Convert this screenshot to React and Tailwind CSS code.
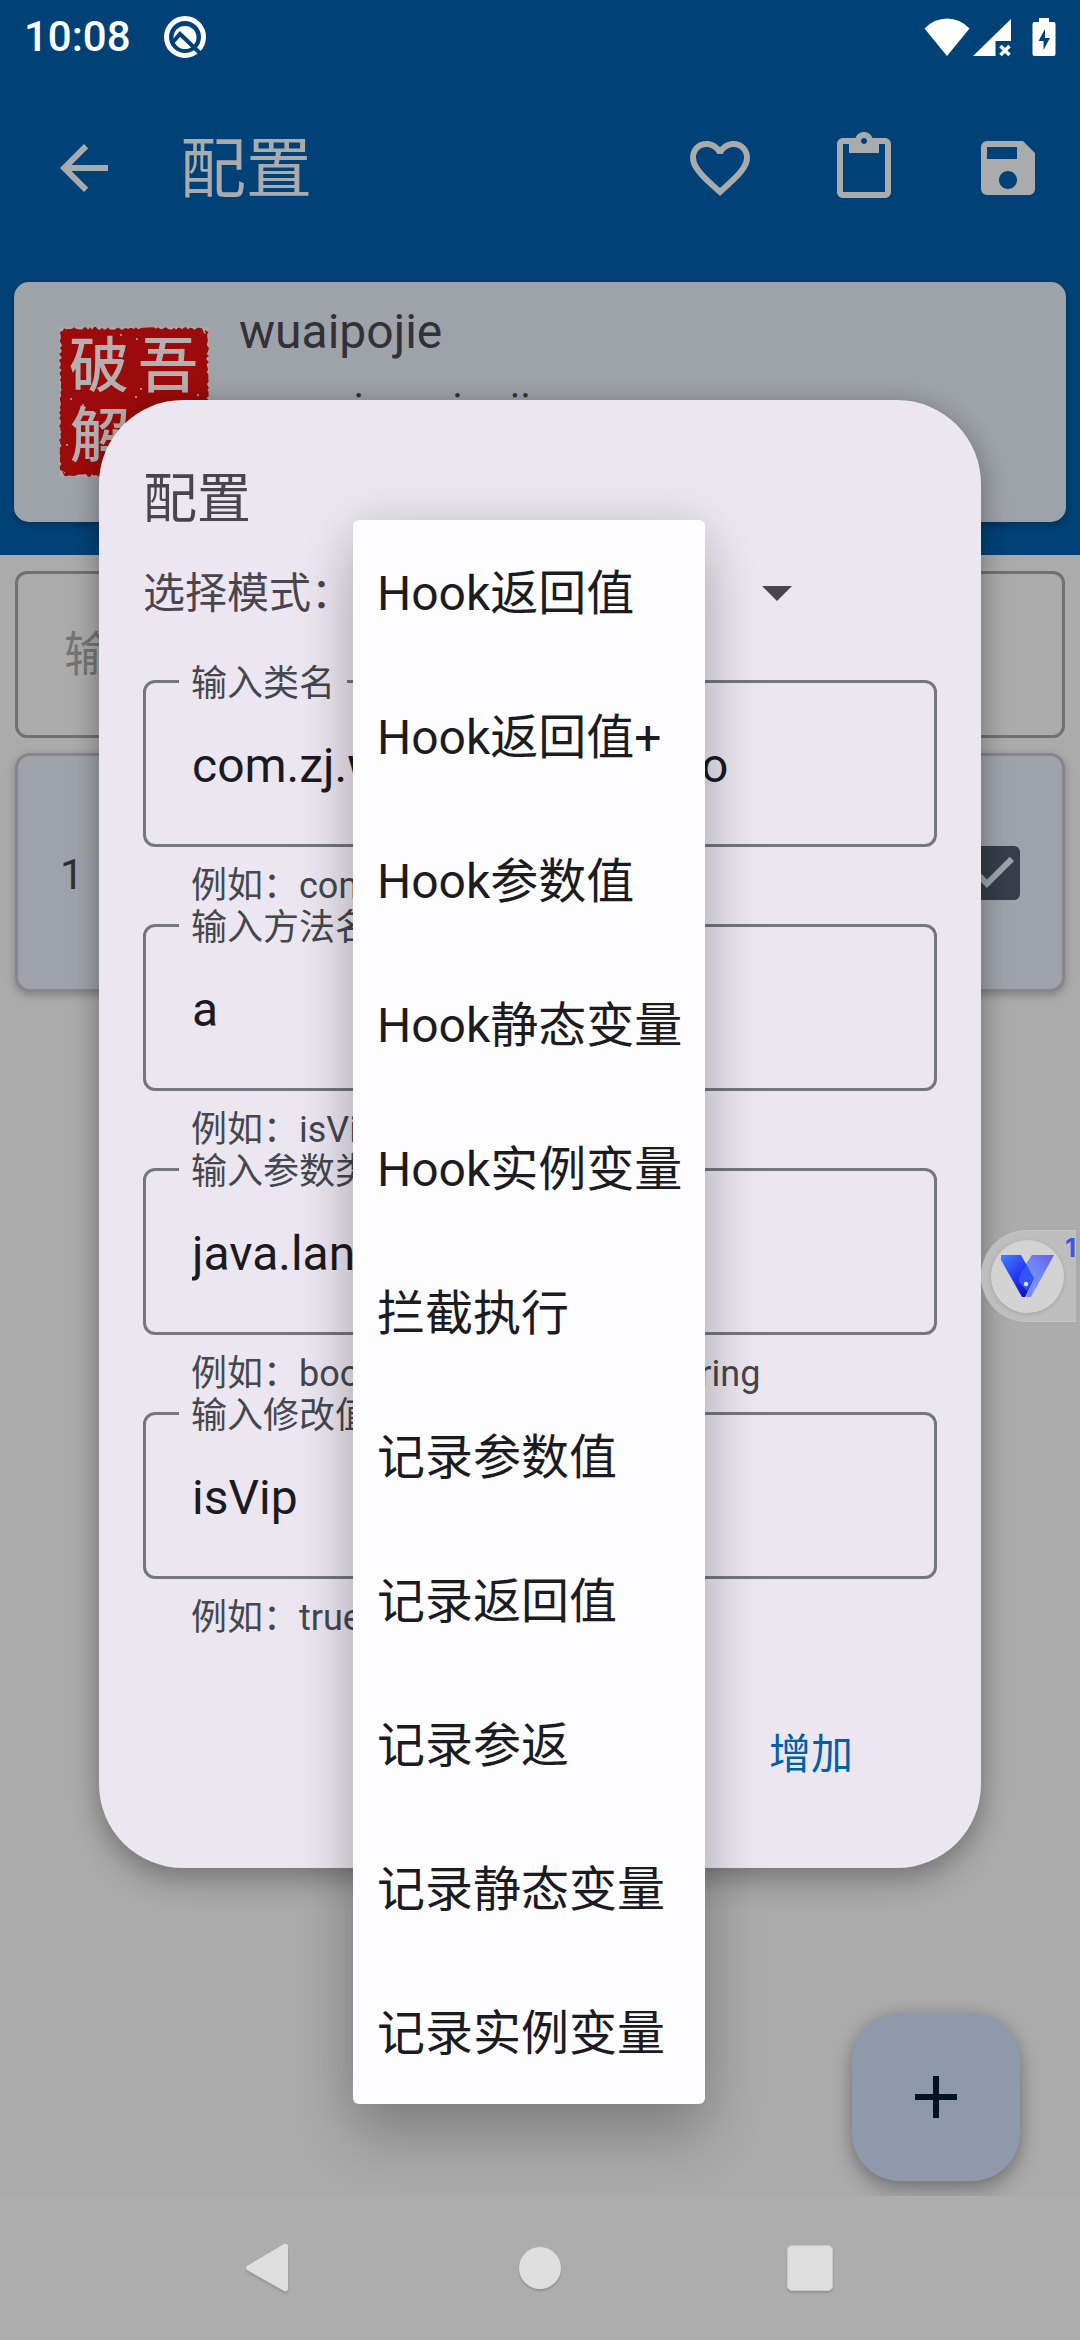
import React from "react";
import { MdArrowBack, MdFavoriteBorder, MdContentPaste, MdSave } from "react-icons/md";

const FIELDS = [
  { id: "class", label: "输入类名", value: "com.zj.wuaipojie.a.Demo", help: "例如：com.zj.Demo" },
  { id: "method", label: "输入方法名", value: "a", help: "例如：isVip" },
  { id: "params", label: "输入参数类型", value: "java.lang.String", help: "例如：boolean,float,java.lang.String" },
  { id: "result", label: "输入修改值", value: "isVip", help: "例如：true" },
];

const MODES = [
  "Hook返回值",
  "Hook返回值+",
  "Hook参数值",
  "Hook静态变量",
  "Hook实例变量",
  "拦截执行",
  "记录参数值",
  "记录返回值",
  "记录参返",
  "记录静态变量",
  "记录实例变量",
];

function StatusBar() {
  return (
    <div className="flex h-[72px] items-center pl-6 pr-6 pt-[2px] text-white">
      <span className="text-[42px] font-medium leading-[60px]">10:08</span>
      <svg className="ml-[33px]" width="42" height="42" viewBox="0 0 42 42" aria-hidden="true">
        <circle cx="21" cy="21" r="18.5" fill="none" stroke="#fff" strokeWidth="5" />
        <circle cx="21" cy="21.5" r="11.5" fill="#fff" />
        <path d="M9 26l7-8 22 21" fill="none" stroke="#004277" strokeWidth="4" />
      </svg>
      <div className="ml-auto flex items-center">
        <svg width="46" height="40" viewBox="0 0 46 40" aria-hidden="true">
          <path d="M0.5 11.5Q10 1.5 23 1.5T45.5 11.5L23 39z" fill="#fff" />
        </svg>
        <svg className="ml-[3px]" width="39" height="40" viewBox="0 0 39 40" aria-hidden="true">
          <path d="M38 2v22H22.500v15H0z" fill="#fff" />
          <path d="M27.500 29l9 9m0-9l-9 9" stroke="#fff" strokeWidth="3.500" />
        </svg>
        <svg className="ml-5" width="24" height="40" viewBox="0 0 24 40" aria-hidden="true">
          <path d="M7 1h10v4h4.500q2 0 2 2v30q0 2-2 2h-19q-2 0-2-2V7q0-2 2-2H7z" fill="#fff" />
          <path d="M13 12v9h5l-6.500 12v-9H6.500z" fill="#004277" />
        </svg>
      </div>
    </div>
  );
}

function AppBar() {
  const action = "flex size-36 items-center justify-center";
  return (
    <div className="flex h-48 items-center text-[#a9abad]">
      <button aria-label="返回" className="flex h-36 w-[168px] items-center justify-center">
        <MdArrowBack size={72} />
      </button>
      <h1 className="ml-3 flex-1 pt-1 text-[66px] leading-[84px]">配置</h1>
      <button aria-label="收藏" className={action}><MdFavoriteBorder size={72} /></button>
      <button aria-label="粘贴" className={action}><MdContentPaste size={72} /></button>
      <button aria-label="保存" className={action}><MdSave size={72} /></button>
    </div>
  );
}

// Deterministic ragged outline for the seal stamp.
function sealOutline() {
  const pts = [];
  let seed = 7;
  const rnd = () => {
    seed = (seed * 16807) % 2147483647;
    return (seed % 100) / 100;
  };
  const inset = (t) => (t < 5 || t > 143 ? 4 : 0) + rnd() * 3;
  for (let t = 3; t <= 147; t += 2) pts.push([t, inset(t)]);
  for (let t = 3; t <= 147; t += 2) pts.push([150 - inset(t), t]);
  for (let t = 147; t >= 3; t -= 2) pts.push([t, 150 - inset(t)]);
  for (let t = 147; t >= 3; t -= 2) pts.push([inset(t), t]);
  return pts.map((p) => p.join(",")).join(" ");
}

function Seal() {
  return (
    <svg width="150" height="150" viewBox="0 0 150 150" role="img" aria-label="吾爱破解">
      <rect width="150" height="150" fill="#aba8ab" />
      <polygon points={sealOutline()} fill="#9c0b0b" />
      <g fill="#b5afaf" fontSize="60" fontWeight="500" textAnchor="middle" fontFamily='"Noto Sans CJK SC", sans-serif'>
        <text x="40" y="60">破</text>
        <text x="109" y="60">吾</text>
        <text x="41" y="130">解</text>
        <text x="109" y="130">爱</text>
      </g>
      <g fill="#b5afaf">
        <circle cx="78" cy="12" r="1" /><circle cx="62" cy="8" r="1" /><circle cx="82" cy="62" r="1" />
        <circle cx="77" cy="70" r="1" /><circle cx="12" cy="72" r="1" /><circle cx="139" cy="68" r="1" />
        <circle cx="24" cy="78" r="1" /><circle cx="8" cy="118" r="1" />
      </g>
    </svg>
  );
}

function Field({ id, label, value, help }) {
  return (
    <div>
      <div className="relative">
        <input
          id={id}
          defaultValue={value}
          className="h-[167px] w-full rounded-xl border-3 border-[#74777f] bg-transparent px-[46px] pt-1 text-[48px] text-[#1b1b1f] outline-none"
        />
        <label htmlFor={id} className="absolute -top-4 left-9 bg-[#ece6f0] px-3 text-[36px] leading-[40px] text-[#44474e]">
          {label}
        </label>
      </div>
      <p className="mt-[19px] h-[38px] pl-12 text-[36px] leading-[40px] text-[#44474e]">{help}</p>
    </div>
  );
}

function ModeSelect() {
  return (
    <div className="relative w-[460px]">
      <button
        id="mode"
        aria-haspopup="listbox"
        aria-expanded="true"
        className="flex h-21 w-full items-center justify-between pl-6 text-[48px] text-[#1b1b1f]"
      >
        Hook返回值
        <svg width="72" height="72" viewBox="0 0 24 24" fill="#49454f" aria-hidden="true">
          <path d="M7 10l5 5 5-5z" />
        </svg>
      </button>
      <ul
        role="listbox"
        aria-labelledby="mode"
        className="absolute -top-[30px] left-0 z-10 w-[352px] rounded-md bg-[#fdfcff] shadow-[0_36px_60px_rgba(0,0,0,0.2),0_0_50px_rgba(0,0,0,0.12)]"
      >
        {MODES.map((mode) => (
          <li
            key={mode}
            role="option"
            aria-selected={mode === MODES[0]}
            className="flex h-36 items-center whitespace-nowrap px-6 pt-1 text-[48px] text-[#1c1b1f]"
          >
            {mode}
          </li>
        ))}
      </ul>
    </div>
  );
}

function ConfigDialog() {
  return (
    <div className="absolute inset-x-0 bottom-36 top-[72px] flex items-center px-[99px]">
      <section
        role="dialog"
        aria-labelledby="dialog-title"
        className="w-full rounded-[84px] bg-[#ece6f0] px-11 pb-15 pt-16 shadow-[0_14px_30px_rgba(0,0,0,0.24),0_0_24px_rgba(0,0,0,0.14)]"
      >
        <h2 id="dialog-title" className="text-[54px] leading-[72px] text-[#49454f]">配置</h2>
        <div className="mt-[14px] flex h-21 items-center">
          <label htmlFor="mode" className="w-[210px] whitespace-nowrap pt-1 text-[42px] leading-[60px] text-[#49454f]">选择模式：</label>
          <ModeSelect />
        </div>
        <div className="mt-[46px] flex flex-col gap-5">
          {FIELDS.map((f) => <Field key={f.id} {...f} />)}
        </div>
        <div className="mt-16 flex justify-end pr-12">
          <button className="h-27 px-9 text-[42px] text-[#0061a4]">增加</button>
        </div>
      </section>
    </div>
  );
}

function Bubble() {
  return (
    <button
      aria-label="悬浮窗"
      className="absolute right-1 top-[1230px] z-20 flex h-23 w-[95px] items-center rounded-l-full border-y border-[#c6c6c6] bg-[#bebebe] pl-[10px]"
    >
      <span className="flex size-[73px] items-center justify-center rounded-full bg-[#d3d3d3] shadow-[0_1px_4px_rgba(0,0,0,0.14)]">
        <svg width="53" height="42" viewBox="0 0 53 42" aria-hidden="true">
          <defs>
            <linearGradient id="vl" x1="0" y1="0" x2="0.8" y2="1">
              <stop offset="0" stopColor="#4380ff" /><stop offset="0.55" stopColor="#2238f0" /><stop offset="1" stopColor="#0e0eb8" />
            </linearGradient>
            <linearGradient id="vr" x1="1" y1="0" x2="0.2" y2="1">
              <stop offset="0" stopColor="#6a5ce6" /><stop offset="0.4" stopColor="#6e82f2" /><stop offset="1" stopColor="#8b9cf8" />
            </linearGradient>
          </defs>
          <path d="M31 0H53L30 42H25L18 25 25 9z" fill="url(#vr)" />
          <path d="M0 0H20L33 23 24 42H21L0 5z" fill="url(#vl)" />
          <path d="M25 9L33 22V26L30 42H26L33 25z" fill="#7589f4" />
          <path d="M25 10L33 23 26 36 18 27V22z" fill="#3154fb" />
          <circle cx="25" cy="29" r="2.200" fill="#dfe6ff" />
        </svg>
      </span>
      <span className="absolute right-0 top-0 font-['Inter'] text-[25px] font-bold leading-[34px] text-[#3f55e8]">1</span>
    </button>
  );
}

function NavBar() {
  return (
    <nav className="flex h-36 items-center justify-center gap-[134px] bg-[#adadad]">
      <button aria-label="返回" className="flex size-[136px] items-center justify-center">
        <svg width="48" height="56" viewBox="0 0 48 56" className="drop-shadow-[0_2px_1px_rgba(0,0,0,0.15)]">
          <path d="M38 4L1 26q-2 2 0 4L38 51q4 1 4-3V7q0-4-4-3z" fill="#dedede" />
        </svg>
      </button>
      <button aria-label="主页" className="flex size-[136px] items-center justify-center">
        <span className="size-[42px] rounded-full bg-[#dedede] shadow-[0_2px_2px_rgba(0,0,0,0.15)]" />
      </button>
      <button aria-label="最近任务" className="flex size-[136px] items-center justify-center">
        <span className="size-[46px] rounded-[5px] border border-[#c8c8c8] bg-[#dedede] shadow-[0_2px_2px_rgba(0,0,0,0.15)]" />
      </button>
    </nav>
  );
}

export default function App() {
  return (
    <div className="relative flex min-h-screen flex-col bg-[#ababab] font-['Roboto','Noto_Sans_CJK_SC',sans-serif]">
      <header className="bg-[#004277] pb-[33px]">
        <StatusBar />
        <AppBar />
        <div className="mx-[14px] mt-[18px] flex h-60 items-center rounded-[15px] bg-[#9ea2a9] pl-[45px] shadow-[0_3px_8px_rgba(0,0,0,0.25)]">
          <Seal />
          <div className="ml-[30px] self-start pt-5 text-[#333138]">
            <p className="text-[48px] leading-[60px]">wuaipojie</p>
            <p className="mt-[21px] text-[42px] leading-[52px]">com.zj.wuaipojie</p>
          </div>
        </div>
      </header>

      <main className="flex flex-1 flex-col overflow-hidden px-[15px] pt-4">
        <input
          aria-label="输入关键字"
          placeholder="输入关键字"
          className="h-[167px] w-full rounded-xl border-3 border-[#707171] bg-transparent px-[46px] text-[48px] outline-none placeholder:text-[#757575]"
        />
        <div className="mt-[15px] flex h-[239px] items-center justify-between rounded-[15px] border-3 border-[#88858d] bg-[#9ea2aa] pl-[42px] pr-[42px] shadow-[0_3px_8px_rgba(0,0,0,0.25)]">
          <span className="pt-1 text-[42px] leading-[60px] text-[#313036]">1</span>
          <label className="relative flex size-[54px]">
            <input type="checkbox" defaultChecked aria-label="启用" className="size-[54px] appearance-none rounded-md bg-[#373d49]" />
            <svg className="pointer-events-none absolute inset-0" viewBox="3 3 18 18" fill="#9ea2aa" aria-hidden="true">
              <path d="M10 17l-5-5 1.410-1.410L10 14.170l7.590-7.590L19 8z" />
            </svg>
          </label>
        </div>
        <button
          aria-label="添加"
          className="mb-[15px] mr-[45px] mt-auto flex size-42 items-center justify-center self-end rounded-[48px] bg-[#8e99ab] shadow-[0_10px_20px_rgba(0,0,0,0.26),0_0_14px_rgba(0,0,0,0.12)]"
        >
          <svg width="72" height="72" viewBox="0 0 24 24" fill="#001225" aria-hidden="true">
            <path d="M19 13h-6v6h-2v-6H5v-2h6V5h2v6h6z" />
          </svg>
        </button>
      </main>

      <NavBar />
      <ConfigDialog />
      <Bubble />
    </div>
  );
}
